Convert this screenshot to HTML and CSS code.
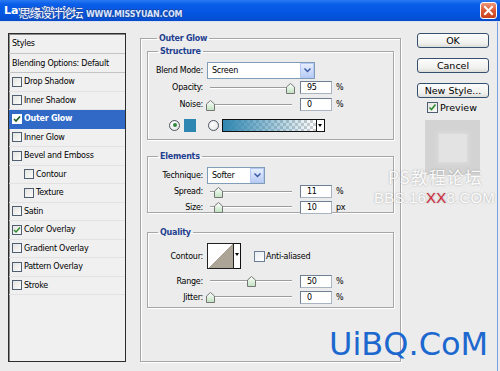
FILE: index.html
```html
<!DOCTYPE html>
<html lang="en">
<head>
    <meta charset="UTF-8">
    <title>Layer Style</title>
    <link rel="stylesheet" href="styles.css">
</head>
<body>
    <div class="titlebar">
        <span class="title">Layer Style</span>
        <span class="wm-cn">思缘设计论坛</span>
        <span class="wm-url">WWW.MISSYUAN.COM</span>
        <span class="close">
            <svg width="11" height="11" viewBox="0 0 11 11"><path d="M2 2 L9 9 M9 2 L2 9" stroke="#fff" stroke-width="2" stroke-linecap="square"/></svg>
        </span>
    </div>

    <div class="dialog">
        <!-- left: style list -->
        <div class="styles">
            <div class="sp-head">Styles</div>
            <div class="sp-head">Blending Options: Default</div>
            <div class="sp-item"><span class="cb"></span>Drop Shadow</div>
            <div class="sp-item"><span class="cb"></span>Inner Shadow</div>
            <div class="sp-item active"><span class="cb on"><svg width="8" height="8" viewBox="0 0 8 8"><path d="M1 4 L3 6 L7 1.5" fill="none" stroke="#1d5a1d" stroke-width="1.6"/></svg></span>Outer Glow</div>
            <div class="sp-item"><span class="cb"></span>Inner Glow</div>
            <div class="sp-item"><span class="cb"></span>Bevel and Emboss</div>
            <div class="sp-item sub"><span class="cb"></span>Contour</div>
            <div class="sp-item sub"><span class="cb"></span>Texture</div>
            <div class="sp-item"><span class="cb"></span>Satin</div>
            <div class="sp-item"><span class="cb on"><svg width="8" height="8" viewBox="0 0 8 8"><path d="M1 4 L3 6 L7 1.5" fill="none" stroke="#2e8b2e" stroke-width="1.4"/></svg></span>Color Overlay</div>
            <div class="sp-item"><span class="cb"></span>Gradient Overlay</div>
            <div class="sp-item"><span class="cb"></span>Pattern Overlay</div>
            <div class="sp-item"><span class="cb"></span>Stroke</div>
        </div>

        <!-- middle: settings -->
        <fieldset class="group outer">
            <legend>Outer Glow</legend>

            <fieldset class="group structure">
                <legend>Structure</legend>
                <div class="row r17">
                    <span class="lbl">Blend Mode:</span>
                    <span class="select wide">Screen<span class="arrow"><svg width="7" height="5" viewBox="0 0 7 5"><path d="M0.5 0.5 L3.5 3.5 L6.5 0.5" fill="none" stroke="#3a58a8" stroke-width="1.4"/></svg></span></span>
                </div>
                <div class="row r17">
                    <span class="lbl">Opacity:</span>
                    <span class="slider"><span class="thumb" style="left:79px"></span></span>
                    <span class="num">95</span><span class="unit">%</span>
                </div>
                <div class="row r17">
                    <span class="lbl">Noise:</span>
                    <span class="slider"><span class="thumb" style="left:-1px"></span></span>
                    <span class="num">0</span><span class="unit">%</span>
                </div>
                <div class="row colors">
                    <span class="radio on"></span>
                    <span class="swatch"></span>
                    <span class="radio"></span>
                    <span class="gradient"></span><span class="drop"></span>
                </div>
            </fieldset>

            <fieldset class="group elements">
                <legend>Elements</legend>
                <div class="row r17">
                    <span class="lbl">Technique:</span>
                    <span class="select narrow">Softer<span class="arrow"><svg width="7" height="5" viewBox="0 0 7 5"><path d="M0.5 0.5 L3.5 3.5 L6.5 0.5" fill="none" stroke="#3a58a8" stroke-width="1.4"/></svg></span></span>
                </div>
                <div class="row r15">
                    <span class="lbl">Spread:</span>
                    <span class="slider"><span class="thumb" style="left:7px"></span></span>
                    <span class="num">11</span><span class="unit">%</span>
                </div>
                <div class="row r15">
                    <span class="lbl">Size:</span>
                    <span class="slider"><span class="thumb" style="left:7px"></span></span>
                    <span class="num">10</span><span class="unit">px</span>
                </div>
            </fieldset>

            <fieldset class="group quality">
                <legend>Quality</legend>
                <div class="row contour-row">
                    <span class="lbl">Contour:</span>
                    <span class="contour"></span><span class="drop tall"></span>
                    <span class="cb aa"></span><span>Anti-aliased</span>
                </div>
                <div class="row r16 gap">
                    <span class="lbl">Range:</span>
                    <span class="slider"><span class="thumb" style="left:40px"></span></span>
                    <span class="num">50</span><span class="unit">%</span>
                </div>
                <div class="row r16">
                    <span class="lbl">Jitter:</span>
                    <span class="slider"><span class="thumb" style="left:-1px"></span></span>
                    <span class="num">0</span><span class="unit">%</span>
                </div>
            </fieldset>
        </fieldset>

        <!-- right: buttons and preview -->
        <div class="side">
            <div class="btn">OK</div>
            <div class="btn">Cancel</div>
            <div class="btn">New Style...</div>
            <div class="preview-row">
                <span class="cb big on"><svg width="9" height="9" viewBox="0 0 9 9"><path d="M1.5 4.5 L3.5 6.5 L7.5 1.5" fill="none" stroke="#2e8b2e" stroke-width="1.6"/></svg></span>Preview
            </div>
            <div class="preview"><div class="preview-inner"></div></div>
        </div>
    </div>

    <div class="wm-forum">PS教程论坛</div>
    <div class="wm-bbs">BBS.16<span class="red">XX</span>8.COM</div>
    <div class="wm-uibq">UiBQ.CoM</div>
</body>
</html>
```

FILE: styles.css
```css
* {
    margin: 0;
    padding: 0;
    box-sizing: border-box;
}

body {
    width: 500px;
    height: 371px;
    overflow: hidden;
    position: relative;
    background: #ececec;
    font-family: "DejaVu Sans", sans-serif;
    font-size: 8px;
    letter-spacing: -0.25px;
    color: #000;
}

/* window title */
.titlebar {
    position: relative;
    height: 22px;
    display: flex;
    align-items: center;
    padding-left: 4px;
    background: linear-gradient(#2a7af2 0%, #0a5ee8 20%, #0556e2 60%, #0450d6 90%, #0a48c0 100%);
    border-bottom: 1px solid #d8e2f4;
}

.title {
    color: #fff;
    font-weight: bold;
    font-size: 11px;
    letter-spacing: 0;
}

.wm-cn {
    position: absolute;
    left: 19px;
    top: 5px;
    font-family: "Noto Sans CJK SC", sans-serif;
    font-size: 12px;
    line-height: 15px;
    letter-spacing: -1.5px;
    color: #fff;
    text-shadow: 1px 0 #2050b0, -1px 0 #2050b0, 0 1px #2050b0, 0 -1px #2050b0;
}

.wm-url {
    position: absolute;
    left: 86px;
    top: 10px;
    font-size: 8px;
    line-height: 10px;
    font-weight: bold;
    letter-spacing: -0.2px;
    color: #d6e6ff;
    text-shadow: 1px 0 #1745a8, -1px 0 #1745a8, 0 1px #1745a8, 0 -1px #1745a8;
}

.close {
    position: absolute;
    right: 3px;
    top: 2px;
    width: 17px;
    height: 17px;
    border: 1px solid #fff;
    border-radius: 3px;
    background: linear-gradient(#ee9a7c, #dc5a36 50%, #c8401c);
    display: flex;
    align-items: center;
    justify-content: center;
}

/* dialog body */
.dialog {
    display: flex;
    align-items: flex-start;
    padding: 11px 0 0 8px;
    width: 498px;
    height: 349px;
    border-right: 1px solid #7a9ee0;
}

.styles {
    width: 118px;
    height: 329px;
    background: #f0f0f0;
    border: 1px solid #2c2c2c;
    box-shadow: inset 1px 1px 0 #8a8a8a;
}

.sp-head {
    height: 20px;
    line-height: 19px;
    padding-left: 3px;
    border-bottom: 1px solid #c4c4c4;
}

.sp-head + .sp-head {
    height: 19px;
}

.sp-item {
    height: 18.5px;
    display: flex;
    align-items: center;
    padding-left: 3px;
    border-bottom: 1px solid #e2e2e2;
}

.sp-item.sub {
    padding-left: 15px;
}

.sp-item.active {
    background: #3169c6;
    color: #fff;
    font-weight: bold;
    border-bottom-color: #3169c6;
}

.cb {
    width: 10px;
    height: 10px;
    margin-right: 2px;
    border: 1px solid #4f5e70;
    background: linear-gradient(135deg, #e4e4e0, #fbfbfb);
    display: inline-flex;
    align-items: center;
    justify-content: center;
    flex-shrink: 0;
}

.active .cb {
    border-color: #fff;
    background: #fff;
}

.cb.big {
    width: 11px;
    height: 11px;
    margin-right: 2px;
}

/* groups */
.group {
    border: 1px solid #a6a6a6;
    box-shadow: inset 1px 1px 0 #fff, 1px 1px 0 #fff;
}

.group legend {
    margin-left: 10px;
    padding: 0 2px;
    font-weight: bold;
    line-height: 11px;
    color: #1f3f8f;
}

.outer {
    margin-left: 14px;
    width: 261px;
    height: 329px;
    padding: 2px 6px 0 6px;
}

.structure {
    height: 94px;
    padding-top: 5px;
}

.elements {
    margin-top: 11px;
    height: 62px;
    padding-top: 5px;
}

.quality {
    margin-top: 14px;
    height: 81px;
    padding-top: 5px;
}

.row {
    display: flex;
    align-items: center;
}

.r17 { height: 17px; }
.r16 { height: 16px; }
.r15 { height: 15.5px; }
.gap { margin-top: 4px; }

.lbl {
    width: 55px;
    margin-right: 4px;
    text-align: right;
    flex-shrink: 0;
}

.select {
    position: relative;
    height: 17px;
    display: flex;
    align-items: center;
    padding-left: 4px;
    background: #fff;
    border: 1px solid #7f9db9;
}

.select.wide { width: 108px; }
.select.narrow { width: 58px; }

.select .arrow {
    position: absolute;
    right: 0;
    top: 0;
    width: 14px;
    height: 15px;
    border: 1px solid #b4c8f4;
    background: linear-gradient(#e6eefd, #b9ccf4);
    display: flex;
    align-items: center;
    justify-content: center;
}

.slider {
    position: relative;
    width: 89px;
    height: 12px;
    margin-right: 4px;
}

.slider::before {
    content: "";
    position: absolute;
    left: 3px;
    right: 4px;
    top: 5px;
    height: 1px;
    background: #9c9c9c;
    box-shadow: 0 1px 0 #fff;
}

.thumb {
    position: absolute;
    top: 1px;
    width: 9px;
    height: 11px;
    background: url("data:image/svg+xml,%3Csvg xmlns='http://www.w3.org/2000/svg' width='9' height='11'%3E%3Cdefs%3E%3ClinearGradient id='g' x1='0' y1='0' x2='0' y2='1'%3E%3Cstop offset='0' stop-color='%23ffffff'/%3E%3Cstop offset='1' stop-color='%23bfe2bf'/%3E%3C/linearGradient%3E%3C/defs%3E%3Cpath d='M0.5 4 L4.5 0.5 L8.5 4 L8.5 10.5 L0.5 10.5 Z' fill='url(%23g)' stroke='%23767676'/%3E%3C/svg%3E") no-repeat;
}

.num {
    width: 32px;
    height: 13px;
    padding-left: 6px;
    line-height: 11px;
    background: #fff;
    border: 1px solid #6f7f93;
    border-right-color: #a8b4c2;
    border-bottom-color: #a8b4c2;
}

.unit {
    margin-left: 4px;
}

.colors {
    height: 14px;
    margin-top: 5px;
    padding-left: 21px;
}

.radio {
    width: 11px;
    height: 11px;
    border-radius: 50%;
    border: 1px solid #4d5560;
    background: radial-gradient(circle at 35% 35%, #fff, #e2e2e2);
    position: relative;
    flex-shrink: 0;
}

.radio.on::after {
    content: "";
    position: absolute;
    left: 2.5px;
    top: 2.5px;
    width: 4px;
    height: 4px;
    border-radius: 50%;
    background: #2f8a40;
}

.swatch {
    width: 12px;
    height: 13px;
    margin: 0 12px 0 4px;
    background: #2d86b1;
}

.gradient {
    width: 95px;
    height: 13px;
    margin-left: 3px;
    border: 1px solid #111;
    background:
        linear-gradient(to right, #2f86b0, rgba(47, 134, 176, 0.6) 40%, rgba(47, 134, 176, 0)),
        repeating-conic-gradient(#cfcfcf 0 25%, #fff 0 50%) 0 0 / 6px 6px;
}

.drop {
    width: 8px;
    height: 13px;
    border: 1px solid #111;
    border-left: none;
    background: #fff;
    position: relative;
}

.drop::after {
    content: "";
    position: absolute;
    left: 1px;
    top: 4px;
    border-left: 2.5px solid transparent;
    border-right: 2.5px solid transparent;
    border-top: 3px solid #000;
}

.contour-row {
    height: 26px;
}

.contour {
    width: 27px;
    height: 26px;
    border: 1px solid #222;
    background: linear-gradient(to top left, #aca497 50%, #fff 50%);
}

.drop.tall {
    width: 7px;
    height: 26px;
}

.drop.tall::after {
    top: 9px;
    left: 0.5px;
}

.cb.aa {
    width: 11px;
    height: 11px;
    margin-left: 13px;
    margin-right: 1px;
    background: linear-gradient(135deg, #e8eef4, #fff);
    border-color: #6a7f95;
}

/* right column */
.side {
    margin-left: 16px;
    width: 72px;
    display: flex;
    flex-direction: column;
    font-size: 9.5px;
    letter-spacing: 0;
}

.btn {
    height: 15px;
    margin-bottom: 10px;
    display: flex;
    align-items: center;
    justify-content: center;
    border: 1px solid #35506f;
    border-radius: 3px;
    background: linear-gradient(#fdfdfd, #f0f0ee 70%, #dcdcd8);
}

.btn:nth-child(3) {
    margin-bottom: 4px;
}

.preview-row {
    height: 11px;
    display: flex;
    align-items: center;
    padding-left: 10px;
}

.preview {
    width: 55px;
    height: 55px;
    margin: 7px 0 0 8px;
    background: #d3d3d3;
    padding: 14px;
}

.preview-inner {
    width: 28px;
    height: 28px;
    background: #e3e3e3;
    box-shadow: 0 0 4px 2px #dcdcdc;
}

/* watermarks over the dialog */
.wm-forum {
    position: absolute;
    left: 388px;
    top: 168px;
    font-family: "Noto Sans CJK SC", sans-serif;
    font-size: 17px;
    line-height: 18px;
    letter-spacing: 1px;
    color: rgba(255, 255, 255, 0.95);
    text-shadow: 0 0 2px rgba(0, 0, 0, 0.3);
}

.wm-bbs {
    position: absolute;
    left: 374px;
    top: 189px;
    font-family: "Liberation Sans", sans-serif;
    font-size: 15px;
    line-height: 17px;
    letter-spacing: 0.2px;
    white-space: nowrap;
    color: rgba(255, 255, 255, 0.95);
    text-shadow: 0 0 2px rgba(0, 0, 0, 0.3);
}

.wm-bbs .red {
    color: #d42a3c;
}

.wm-uibq {
    position: absolute;
    left: 329px;
    top: 326px;
    font-family: "DejaVu Sans", sans-serif;
    font-size: 32px;
    line-height: 36px;
    letter-spacing: 0;
    color: #1c68cf;
}
```
